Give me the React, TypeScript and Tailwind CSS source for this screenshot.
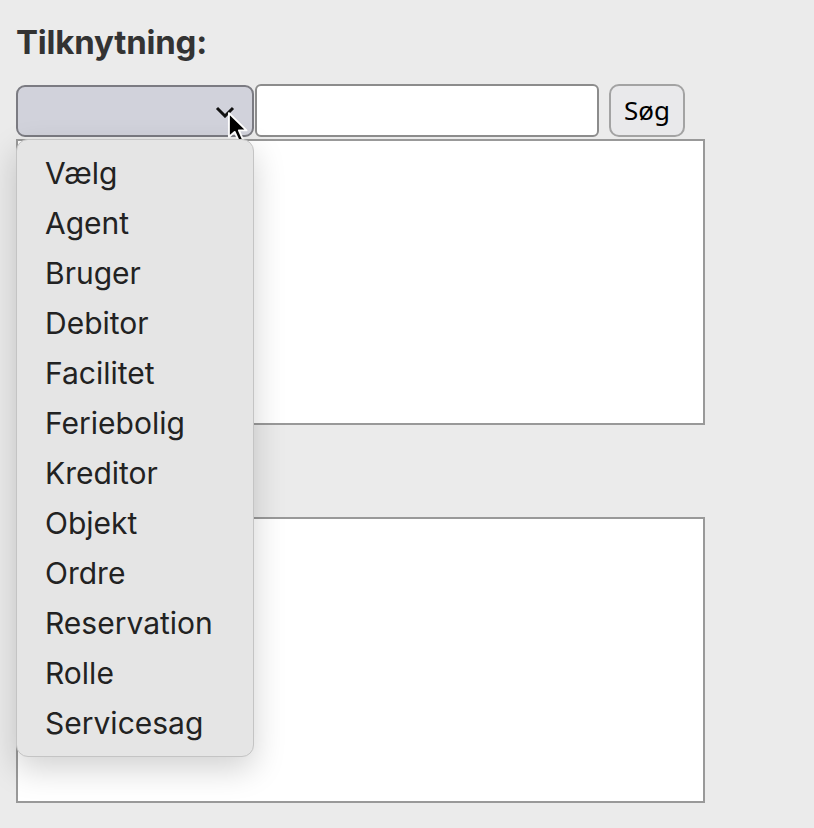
const options = [
  'Vælg',
  'Agent',
  'Bruger',
  'Debitor',
  'Facilitet',
  'Feriebolig',
  'Kreditor',
  'Objekt',
  'Ordre',
  'Reservation',
  'Rolle',
  'Servicesag',
]

function Cursor() {
  return (
    <svg width="23" height="33" viewBox="0 0 12 17" className="absolute left-[209px] top-[24px]">
      <path
        d="M1 1 L1 13.5 L4 10.8 L6.2 15.6 L8.3 14.7 L6.2 10 L10.2 10 Z"
        fill="#000"
        stroke="#fff"
        strokeWidth="1"
        strokeLinejoin="round"
      />
    </svg>
  )
}

export default function App() {
  return (
    <div className="min-h-screen bg-[#ebebeb] px-[16px] pt-[21px] font-['Inter','Noto_Sans',sans-serif] text-[#222]">
      <h2 className="text-[33px] font-bold leading-[42px] text-[#333] tracking-[-0.2px]">Tilknytning:</h2>
      <div className="relative mt-[21px] w-[689px]">
        <div className="flex items-center">
          <div className="relative h-[52px] w-[238px] rounded-[9px] border-2 border-[#7b7b82] bg-[#d1d2db]">
            <svg width="20" height="12" viewBox="0 0 20 12" className="absolute left-[197px] top-[19px]">
              <path d="M2 2 L10 10 L18 2" fill="none" stroke="#111" strokeWidth="3" />
            </svg>
            <Cursor />
          </div>
          <input className="ml-[1px] h-[53px] w-[344px] rounded-[6px] border-2 border-[#8c8c8c] bg-white outline-none" />
          <button className="ml-[10px] h-[53px] w-[76px] rounded-[10px] border-2 border-[#a3a3a3] bg-[#e9e9eb] font-['Noto_Sans',sans-serif] text-[26px] text-black">
            Søg
          </button>
        </div>
        <textarea className="mt-[2px] block h-[286px] w-[689px] resize-none border-2 border-[#999] bg-white" />
        <div className="h-[92px]" />
        <textarea className="block h-[286px] w-[689px] resize-none border-2 border-[#999] bg-white" />

        <ul className="absolute left-[0px] top-[55px] w-[238px] rounded-[12px] border border-[#c4c4c4] bg-[#e5e5e5] py-[8px] shadow-[0_12px_32px_rgba(0,0,0,0.18)]">
          {options.map((o) => (
            <li key={o} className="flex h-[50px] items-center pl-[28px] text-[30px] leading-none text-[#222]">
              {o}
            </li>
          ))}
        </ul>
      </div>
    </div>
  )
}
